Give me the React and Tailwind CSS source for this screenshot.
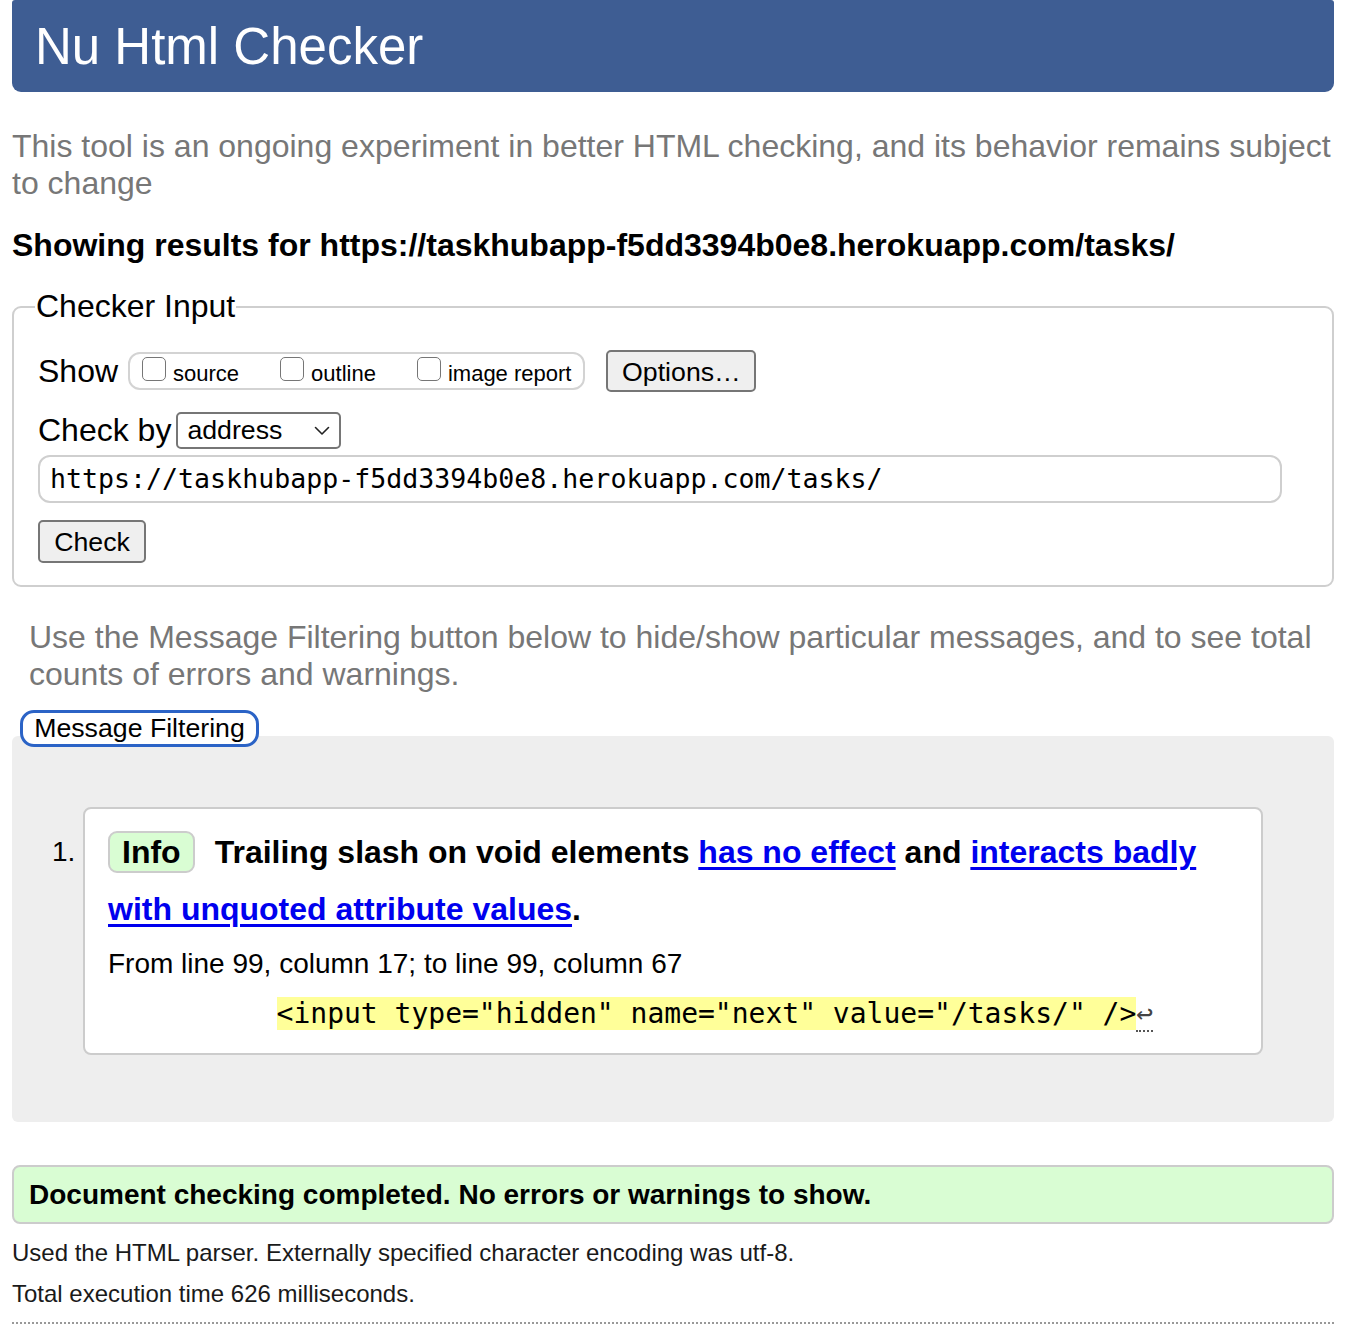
const Box = ({ label }) => (
    <label className="flex items-center">
        <span className="mb-[4px] block h-[24px] w-[24px] rounded-[5px] border-[1.5px] border-[#767676] bg-white" />
        <span className="ml-[7px] mt-[6px] text-[22px] leading-[26px]">{label}</span>
    </label>
);

const App = () => {
    return (
        <div className="min-h-screen bg-white px-3 font-['Liberation_Sans',Arial,sans-serif] text-black">
            <header className="flex h-[92px] items-center rounded-b-[9px] rounded-t-[3px] bg-[#3e5d93] pl-[23px]">
                <h1 className="text-[51px] leading-none text-white">Nu Html Checker</h1>
            </header>

            <p className="mt-[36px] text-[32px] leading-[37px] text-[#777]">
                This tool is an ongoing experiment in better HTML checking, and its behavior remains subject to change
            </p>
            <h2 className="mt-[25px] text-[32px] font-bold leading-[37px]">
                Showing results for https://taskhubapp-f5dd3394b0e8.herokuapp.com/tasks/
            </h2>

            <fieldset className="mt-[24px] rounded-[9px] border-2 border-[#cfcfcf] px-[24px] pb-[22px]">
                <legend className="-ml-[3px] px-[1px] text-[32px] leading-[37px]">Checker Input</legend>
                <div className="mt-[25px] flex items-center">
                    <span className="text-[32px] leading-[37px]">Show</span>
                    <div className="ml-[10px] flex h-[38px] items-center gap-[41px] rounded-[12px] border-2 border-[#d3d3d3] px-[12px]">
                        <Box label="source" />
                        <Box label="outline" />
                        <Box label="image report" />
                    </div>
                    <button className="ml-[21px] h-[42px] w-[150px] rounded-[5px] border-2 border-[#767676] bg-[#efefef] text-[26.7px]">
                        Options…
                    </button>
                </div>
                <div className="mt-[20px] flex items-center">
                    <span className="text-[32px] leading-[37px]">Check by</span>
                    <div className="ml-[5px] flex h-[37px] w-[165px] items-center justify-between rounded-[5px] border-2 border-[#767676] pl-[9px] pr-[9px] text-[26.7px]">
                        <span>address</span>
                        <svg width="16" height="10" viewBox="0 0 16 10" fill="none" stroke="#222" strokeWidth="1.6" strokeLinecap="round" strokeLinejoin="round">
                            <path d="M1.5 1.5 8 8l6.5-6.5" />
                        </svg>
                    </div>
                </div>
                <div className="mt-[6px] flex h-[48px] w-[1244px] items-center rounded-[12px] border-2 border-[#cfcfcf] pl-[10px] font-['DejaVu_Sans_Mono',monospace] text-[26.6px]">
                    https://taskhubapp-f5dd3394b0e8.herokuapp.com/tasks/
                </div>
                <button className="mt-[17px] block h-[43px] w-[108px] rounded-[5px] border-2 border-[#767676] bg-[#efefef] text-[26.7px]">
                    Check
                </button>
            </fieldset>

            <p className="mt-[32px] px-[17px] text-[32px] leading-[37px] text-[#777]">
                Use the Message Filtering button below to hide/show particular messages, and to see total counts of errors and warnings.
            </p>

            <div className="relative z-10 ml-[8px] mt-[17px] flex h-[37px] w-[239px] items-center justify-center rounded-[14px] border-[3px] border-[#2b63c6] bg-white text-[26.7px]">
                Message Filtering
            </div>

            <div className="-mt-[11px] rounded-[6px] bg-[#eeeeee] pb-[67px] pl-[40px] pr-[71px] pt-[71px]">
                <div className="flex">
                    <span className="w-[31px] pt-[30px] text-[28px] leading-[30px]">1.</span>
                    <div className="flex-1 rounded-[8px] border-2 border-[#cccccc] bg-white pb-[23px] pl-[23px] pr-[23px] pt-[15px]">
                        <p className="text-[32px] font-bold leading-[57px]">
                            <span className="relative -top-[3px] mr-[20px] inline-block rounded-[9px] border-2 border-[#cccccc] bg-[#d9fdd3] px-[12px] align-middle leading-[38px]">
                                Info
                            </span>
                            Trailing slash on void elements{' '}
                            <a href="#" className="text-[#0000ee] underline decoration-[3px] underline-offset-[4px]">has no effect</a> and{' '}
                            <a href="#" className="text-[#0000ee] underline decoration-[3px] underline-offset-[4px]">interacts badly with unquoted attribute values</a>.
                        </p>
                        <p className="mt-[7px] text-[28px] leading-[37px]">From line 99, column 17; to line 99, column 67</p>
                        <p className="mt-[16px] whitespace-pre font-['DejaVu_Sans_Mono',monospace] text-[28px] leading-[32px]">
                            {'          '}
                            <b className="bg-[#ffff99] font-normal">{'<input type="hidden" name="next" value="/tasks/" />'}</b>
                            <span className="border-b-2 border-dotted border-[#555] text-[28px] text-[#444]">↩</span>
                        </p>
                    </div>
                </div>
            </div>

            <div className="mt-[43px] flex h-[59px] items-center rounded-[8px] border-2 border-[#cccccc] bg-[#d9fdd3] pl-[15px] text-[28px] font-bold">
                Document checking completed. No errors or warnings to show.
            </div>

            <div className="mt-[8px] border-b-2 border-dotted border-[#999] pb-[8px] text-[24px] leading-[41px] text-[#1a1a1a]">
                <p>Used the HTML parser. Externally specified character encoding was utf-8.</p>
                <p>Total execution time 626 milliseconds.</p>
            </div>
        </div>
    );
};

export default App;
